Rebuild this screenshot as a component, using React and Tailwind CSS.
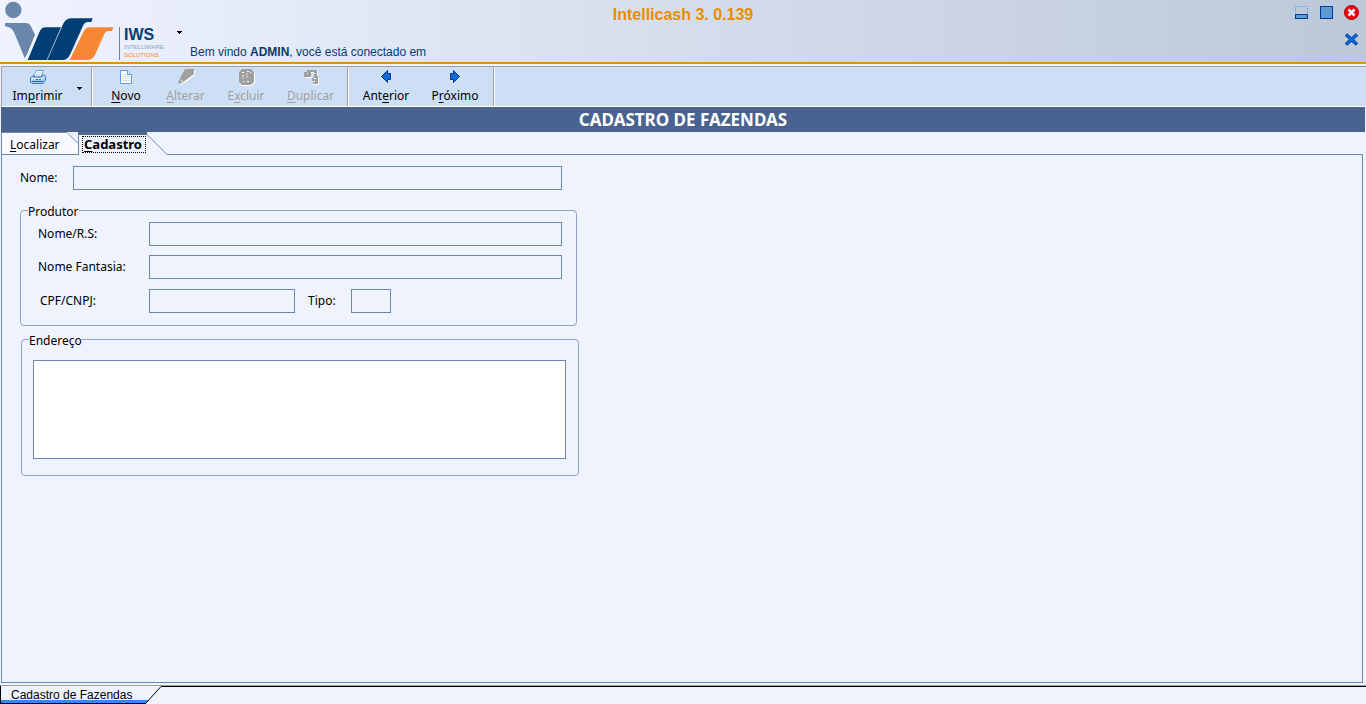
import { useState } from 'react'

function Logo() {
  return (
    <svg width="115" height="62" viewBox="0 0 345 186" aria-hidden="true">
      <circle cx="40" cy="30" r="24.5" fill="#6a87ab" />
      <path d="M15 69H78Q88 69 92 77L105 104L80 165L74 174L43 99Q36 81 15 79Z" fill="#6a87ab" />
      <path d="M83 180L118 97Q124 82 137 82H184L162 132L188 75Q197 55 212 55H278L274 66H264Q254 66 249 77L211 162Q203 180 187 180Z" fill="#003e74" />
      <path d="M184 82L141 180" stroke="#eaeefa" strokeWidth="2" />
      <path d="M209 180L249 98Q256 82 270 82H340L336 93H325Q317 93 313 102L286 163Q278 180 264 180Z" fill="#f68833" />
    </svg>
  )
}

function Caret() {
  return (
    <svg width="5" height="3" viewBox="0 0 5 3" shapeRendering="crispEdges" aria-hidden="true">
      <path d="M0 0h5v1h-1v1h-1v1h-1v-1h-1v-1h-1z" fill="#000" />
    </svg>
  )
}

function PrintIcon() {
  return (
    <svg width="16" height="16" viewBox="0 0 16 16" aria-hidden="true">
      <path d="M6 1.5h7.500L11 8H4z" fill="#fff" stroke="#5f9fdc" />
      <path d="M7 4h4M6 6h4" stroke="#a9c8ea" />
      <path d="M.5 9L3 6.500h1L3.500 8h8l1-2h1.500L15.500 7v4L13 14.500H2L.5 13z" fill="#a9cdf0" stroke="#3a7cc4" />
      <path d="M1 9.500h12l2-2" fill="none" stroke="#e8f3ff" />
      <path d="M2 12.500h11" stroke="#2464ae" />
      <path d="M6 10.500h2" stroke="#e02020" />
      <path d="M9 10.500h2" stroke="#18a030" />
    </svg>
  )
}

function NewIcon() {
  return (
    <svg width="16" height="16" viewBox="0 0 16 16" aria-hidden="true">
      <path d="M2.500 1.500h7l4 4v9h-11z" fill="#fff" stroke="#5b9be0" />
      <path d="M9.500 1.500v4h4" fill="#cfe3fa" stroke="#5b9be0" />
      <path d="M4 5.500h4M4 7.500h8M4 9.500h8M4 11.500h8" stroke="#d5dde8" />
    </svg>
  )
}

function EditIcon() {
  return (
    <svg width="18" height="16" viewBox="0 0 18 16" aria-hidden="true">
      <path d="M9 1h9v5l-8 6-7 4-1-1z" fill="#fff" />
      <path d="M8 0h9v5l-8 6-6 4-2-1 2-5z" fill="#a0a0a0" />
      <path d="M3.500 10.500l2 2" stroke="#fff" />
    </svg>
  )
}

function DeleteIcon() {
  return (
    <svg width="17" height="17" viewBox="0 0 17 17" aria-hidden="true">
      <path d="M4 1h10l3 3v10l-3 3H4l-3-3V4z" fill="#fff" />
      <path d="M4 0h9l3 3v10l-3 3H4l-3-3V3z" fill="#a0a0a0" />
      <path
        d="M4 3.500h2M9 2.500h2M8 6l2-2M5 6v4M10 7l-2 2M5 12l2 2M9 12.500h2M12 3l1 1"
        stroke="#fff"
        strokeDasharray="2 1"
        fill="none"
      />
    </svg>
  )
}

function CopyIcon() {
  return (
    <svg width="16" height="16" viewBox="0 0 16 16" shapeRendering="crispEdges" aria-hidden="true">
      <path d="M2 8h7v1h-7zM7 3h4v1h-4zM14 2h1v6h-1zM15 9h1v7h-6v-1h5z" fill="#fff" />
      <path d="M4 1h10v6h1v8h-5v-3h-1v-3h2v-6h-3v5h-7v-5h3z" fill="#a0a0a0" />
      <path d="M11 4h1v1h-1zM4 4h1v1h-1zM11 9h2v1h-2zM10 12h2v1h-2z" fill="#fff" />
    </svg>
  )
}

function ArrowIcon({ right }) {
  return (
    <svg width="12" height="15" viewBox="0 0 12 15" aria-hidden="true">
      <path
        d={right ? 'M1.500 4.500h3v-3L10.500 7.500l-6 6v-3h-3z' : 'M10.500 4.500h-3v-3L1.500 7.500l6 6v-3h3z'}
        fill="#0a6ad6"
        stroke="#0038a0"
      />
    </svg>
  )
}

function ToolButton({ icon, before = '', hotkey, after, width, disabled }) {
  return (
    <button
      type="button"
      disabled={disabled}
      className={`flex flex-col items-center pt-0.5 text-xs leading-4 ${width} ${disabled ? 'text-[#a0a0a0]' : 'text-black'}`}
    >
      <span className="flex h-[17px] items-start">{icon}</span>
      <span className="mt-0.5">
        {before}
        <span className="underline underline-offset-2">{hotkey}</span>
        {after}
      </span>
    </button>
  )
}

function Divider() {
  return <div className="w-0.5 border-l border-r border-l-[#a0a0a0] border-r-white" />
}

function Header() {
  return (
    <header className="grid h-16 grid-cols-[1fr_auto_1fr] border-b-2 border-[#ec8b00] bg-linear-to-r from-[#eff3ff] to-[#bcc8d9]">
      <div className="flex items-start whitespace-nowrap">
        <Logo />
        <div className="mt-[27px] ml-1 h-[33px] w-[50px] border-l border-[#6a87ab] pl-1">
          <div className="text-base leading-4 font-bold text-[#003e74]">IWS</div>
          <div className="text-[6px] leading-2 text-[#8fa3bf]">INTELLIWARE</div>
          <div className="text-[6px] leading-2 text-[#f68833]">SOLUTIONS</div>
        </div>
        <button type="button" aria-label="Menu" className="mt-[31px] ml-2">
          <Caret />
        </button>
        <p className="mt-11 ml-2 text-xs leading-4 text-[#0a3a72]">
          Bem vindo <b>ADMIN</b>, você está conectado em
        </p>
      </div>
      <h1 className="mt-[5px] text-base leading-5 font-bold text-[#ec8b00]">Intellicash 3. 0.139</h1>
      <div className="flex flex-col items-end gap-3 pt-1 pr-[7px]">
        <div className="flex gap-2.5">
          <button type="button" aria-label="Minimizar">
            <svg width="15" height="16" viewBox="0 0 15 16" shapeRendering="crispEdges">
              <path d="M1 2.500h13M1.500 2v8M13.500 2v8" stroke="#5f9bd3" strokeDasharray="1 1" fill="none" />
              <path d="M1.500 10.500h12v4h-12z" fill="#5f9bd3" stroke="#0038a0" />
            </svg>
          </button>
          <button type="button" aria-label="Maximizar">
            <svg width="15" height="16" viewBox="0 0 15 16" shapeRendering="crispEdges">
              <path d="M1.500 2.500h12v12h-12z" fill="#5f9bd3" stroke="#0038a0" />
            </svg>
          </button>
          <button type="button" aria-label="Fechar">
            <svg width="15" height="16" viewBox="0 0 15 16">
              <circle cx="7.500" cy="8.500" r="7" fill="#f5000c" stroke="#a80010" />
              <path d="M4.500 5.500l6 6M10.500 5.500l-6 6" stroke="#fff" strokeWidth="2.500" />
            </svg>
          </button>
        </div>
        <button type="button" aria-label="Fechar janela">
          <svg width="15" height="14" viewBox="0 0 15 14">
            <path d="M2 2.500l11 10M13 2.500l-11 10" stroke="#0038a0" strokeWidth="3.500" />
            <path d="M2.500 3l10 9M12.500 3l-10 9" stroke="#0a6ad6" strokeWidth="2" />
          </svg>
        </button>
      </div>
    </header>
  )
}

function Toolbar() {
  return (
    <div className="mt-0.5 ml-px flex h-[41px] border-y border-l border-t-[#a0a0a0] border-b-white border-l-[#a0a0a0] bg-[#cddff5]">
      <ToolButton width="w-[71px]" icon={<PrintIcon />} before="Im" hotkey="p" after="rimir" />
      <button type="button" aria-label="Opções de impressão" className="flex w-[18px] items-center pt-1 pl-1">
        <Caret />
      </button>
      <Divider />
      <div className="flex px-[3px]">
        <ToolButton width="w-[60px]" icon={<NewIcon />} hotkey="N" after="ovo" />
        <ToolButton width="w-[59px]" icon={<EditIcon />} hotkey="A" after="lterar" disabled />
        <ToolButton width="w-[62px]" icon={<DeleteIcon />} before="E" hotkey="x" after="cluir" disabled />
        <ToolButton width="w-[67px]" icon={<CopyIcon />} hotkey="D" after="uplicar" disabled />
      </div>
      <Divider />
      <div className="flex px-[3px]">
        <ToolButton width="w-[68px]" icon={<ArrowIcon />} before="Ant" hotkey="e" after="rior" />
        <ToolButton width="w-[70px]" icon={<ArrowIcon right />} before="P" hotkey="r" after="óximo" />
      </div>
      <Divider />
    </div>
  )
}

function Tabs({ active, onChange }) {
  return (
    <div className="ml-px flex h-[23px] text-xs" role="tablist">
      <button
        type="button"
        role="tab"
        aria-selected={active === 'localizar'}
        onClick={() => onChange('localizar')}
        className="w-[66px] border border-r-0 border-[#6e86ae] bg-[#f8faff] pt-0.5 pl-2 text-left"
      >
        <span className="underline underline-offset-2">L</span>ocalizar
      </button>
      <svg width="11" height="23" viewBox="0 0 11 23">
        <path d="M0 0L11 11V23H0z" fill="#f8faff" />
        <path d="M0 .5L11 11.500M0 22.500H11" stroke="#6e86ae" fill="none" />
      </svg>
      <button
        type="button"
        role="tab"
        aria-selected={active === 'cadastro'}
        onClick={() => onChange('cadastro')}
        className="w-[69px] border-t-3 border-l border-t-[#54688c] border-l-[#6e86ae] pb-0.5 pl-[3px] text-left text-[13px] font-bold"
      >
        <span className="block w-16 border border-dotted border-black pl-px leading-[15px]">
          <span className="underline underline-offset-2">C</span>adastro
        </span>
      </button>
      <svg width="20" height="23" viewBox="0 0 20 23">
        <path d="M0 2.500L20 22.500" stroke="#6e86ae" />
      </svg>
      <div className="mr-[3px] flex-1 border-b border-[#6e86ae]" />
    </div>
  )
}

function Field({ id, label, labelClass, inputClass }) {
  return (
    <>
      <label htmlFor={id} className={labelClass}>{label}</label>
      <input id={id} type="text" className={`h-6 border border-[#6e86ae] bg-transparent px-1 outline-none ${inputClass}`} />
    </>
  )
}

export default function App() {
  const [active, setActive] = useState('cadastro')

  return (
    <div className="flex min-h-screen flex-col bg-[#eef3fe] font-['Liberation_Sans',sans-serif] text-black">
      <Header />
      <div className="flex flex-1 flex-col bg-[#eef3fe] font-['Noto_Sans',sans-serif] text-xs">
        <Toolbar />
        <h2 className="mr-px ml-px h-[25px] bg-[#48638f] text-center text-[17px] leading-[26px] font-bold text-white">
          CADASTRO DE FAZENDAS
        </h2>
        <Tabs active={active} onChange={setActive} />
        <main className="mr-[3px] ml-px flex-1 border border-t-0 border-[#6e86ae] pt-[11px] pl-[18px]">
          <div className="flex items-center">
            <Field id="nome" label="Nome:" labelClass="w-[53px]" inputClass="w-[489px]" />
          </div>

          <fieldset className="mt-2.5 h-[126px] w-[557px] rounded border border-[#94a4c2] pl-[17px]">
            <legend className="-ml-2.5 pt-1 leading-4">Produtor</legend>
            <div className="mt-0.5 flex items-center">
              <Field id="razao" label="Nome/R.S:" labelClass="w-[111px]" inputClass="w-[413px]" />
            </div>
            <div className="mt-[9px] flex items-center">
              <Field id="fantasia" label="Nome Fantasia:" labelClass="w-[111px]" inputClass="w-[413px]" />
            </div>
            <div className="mt-2.5 flex items-center">
              <Field id="cpf" label="CPF/CNPJ:" labelClass="w-[111px] pl-0.5" inputClass="w-[146px]" />
              <Field id="tipo" label="Tipo:" labelClass="ml-[13px] w-[43px]" inputClass="w-10" />
            </div>
          </fieldset>

          <fieldset className="mt-[3px] ml-px h-[147px] w-[558px] rounded border border-[#94a4c2] px-[11px]">
            <legend className="-ml-1 pt-1 leading-4">Endereço</legend>
            <textarea
              aria-label="Endereço"
              className="mt-[11px] block h-[99px] w-[533px] resize-none border border-[#6e86ae] bg-white p-1 outline-none"
            />
          </fieldset>
        </main>
      </div>

      <footer className="mt-0.5 flex h-[19px] border-t border-[#a0a0a0] text-xs">
        <button
          type="button"
          className="h-[18px] w-[146px] border-b border-l border-black bg-[#eef3fe] text-left"
        >
          <span className="block h-[17px] border-b-3 border-[#2f8cf5] pl-2.5 leading-[18px]">Cadastro de Fazendas</span>
        </button>
        <svg width="15" height="18" viewBox="0 0 15 18">
          <path d="M0 14h3l-3 3z" fill="#2f8cf5" />
          <path d="M0 17L15 .5" stroke="#000" />
        </svg>
        <div className="flex-1 border-t border-black" />
      </footer>
    </div>
  )
}
